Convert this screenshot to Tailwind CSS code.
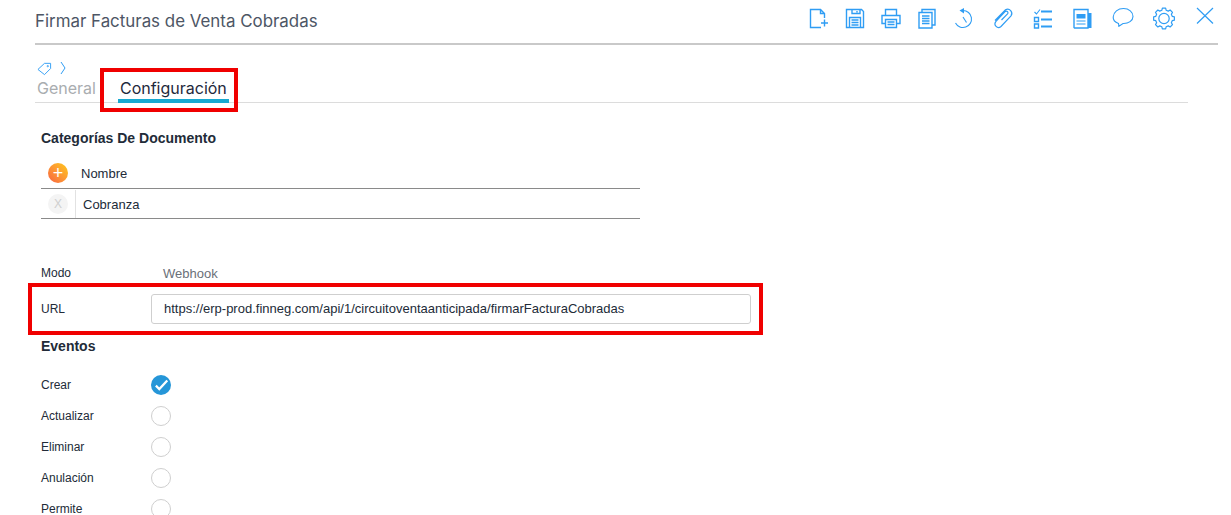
<!DOCTYPE html>
<html lang="es">
<head>
    <meta charset="UTF-8">
    <title>Firmar Facturas de Venta Cobradas</title>
    <script src="https://cdn.jsdelivr.net/npm/@tailwindcss/browser@4"></script>
</head>
<body class="h-[515px] overflow-hidden bg-white font-['Liberation_Sans',sans-serif] text-[#222b38]">
    <!-- Header -->
    <header class="ml-[35px] mr-[13px] h-[45px] border-b-2 border-[#c9c9c9] flex items-start justify-between">
        <h1 class="mt-[10px] text-[16.9px] leading-[22px] text-[#4d5665] font-['Inter',sans-serif]">Firmar Facturas de Venta Cobradas</h1>
        <div class="flex items-start text-[#2f9df4] mr-[1px]">
            <svg class="mt-[6px] w-6 h-6" viewBox="0 0 24 24" fill="none" stroke="currentColor" stroke-width="1.4"><path d="M14 21.5H3.5V3.5H13.5L17.5 7.5V12M13.5 3.5V7.5H17.5M17.5 13.5V20.5M14 17H21"/></svg>
            <svg class="mt-[6px] ml-[12px] w-6 h-6" viewBox="0 0 24 24" fill="none" stroke="currentColor" stroke-width="1.4"><path d="M3.5 3.5H18.5L20.5 5.5V21.5H3.5ZM9 3.5V7.5H17V3.5M14 5V6.5M6.5 21.5V11.5H17.5V21.5M8.5 14H15.5M8.5 16.5H15.5M8.5 19H15.5"/></svg>
            <svg class="mt-[6px] ml-[12px] w-6 h-6" viewBox="0 0 24 24" fill="none" stroke="currentColor" stroke-width="1.4"><path d="M6.5 9.5V3.5H17.5V9.5M6.5 17.5H3V9.5H21V17.5H17.5M6.5 13.5H17.5V21.5H6.5ZM8.5 16H15.5M8.5 18.5H15.5"/></svg>
            <svg class="mt-[6px] ml-[12px] w-6 h-6" viewBox="0 0 24 24" fill="none" stroke="currentColor" stroke-width="1.4"><path d="M7 6.5H17V22H4V6.5H7ZM7 6.5V3.5H20V19H17M7 10H14.5M7 12.5H14.5M7 15H14.5M7 17.5H14.5"/></svg>
            <svg class="mt-[6px] ml-[12px] w-6 h-6" viewBox="0 0 24 24" fill="none" stroke="currentColor" stroke-width="1.1"><path d="M12 4.5A8.5 8.5 0 1 1 4.5 17"/><path d="M8.5 4.5L13 2V7.5Z" fill="currentColor" stroke-width="0"/><path d="M12 11L15.5 16.5"/></svg>
            <svg class="mt-[6px] ml-[16px] w-6 h-6" viewBox="0 0 24 24" fill="none" stroke="currentColor" stroke-width="1.2"><path d="M10.5 14L16.5 7.8C18 6 15.5 4 13.8 5.8L5 15.3C2 19 6.5 23.5 10 20.5L20 9.8C22.5 6.5 18.5 1.5 14.5 3.8L4 14.5"/></svg>
            <svg class="mt-[6px] ml-[16px] w-6 h-6" viewBox="0 0 24 24" fill="none" stroke="currentColor" stroke-width="1.4"><path d="M3.5 6L5.5 8L9 3.5" stroke-width="1.1"/><path d="M3.5 11.5H7.5V15.5H3.5ZM3.5 18H7.5V22H3.5Z"/><path d="M10 5.5H21M10 13.5H21M10 20.5H21" stroke-width="2"/></svg>
            <svg class="mt-[6px] ml-[15px] w-6 h-6" viewBox="0 0 24 24" fill="none" stroke="currentColor" stroke-width="1.4"><path d="M4 3.5H18V22H4.5L4 21.5Z"/><path d="M18 7H21.5V22H18Z" fill="currentColor" stroke-width="0"/><path d="M6.5 8H15.5V12.5H6.5Z" fill="currentColor" stroke-width="0"/><path d="M6.5 15H15.5M6.5 18H15.5" stroke-width="1.2"/></svg>
            <svg class="mt-[5px] ml-[17px] w-6 h-6" viewBox="0 0 24 24" fill="none" stroke="currentColor" stroke-width="1.1"><path d="M7.5 18.5C3.5 17 2 14.5 2.2 12C2.5 7 7 3.5 12.5 3.5C18 3.5 22 7 22 11.5C22 15.5 17.5 18.8 12 18.5L7.5 21.5C7.8 21 7.8 19.5 7.5 18.5Z"/></svg>
            <svg class="mt-[6px] ml-[17px] w-6 h-6" viewBox="0 0 24 24" fill="none" stroke="currentColor" stroke-width="1.2" stroke-linejoin="round"><circle cx="12" cy="12.5" r="5.2"/><path d="M9.8 4.29L10.36 2.13H13.64L14.2 4.29L16.25 5.14L18.17 4.01L20.49 6.33L19.36 8.25L20.21 10.3L22.37 10.86V14.14L20.21 14.7L19.36 16.75L20.49 18.67L18.17 20.99L16.25 19.86L14.2 20.71L13.64 22.87H10.36L9.8 20.71L7.75 19.86L5.83 20.99L3.51 18.67L4.64 16.75L3.79 14.7L1.63 14.14V10.86L3.79 10.3L4.64 8.25L3.51 6.33L5.83 4.01L7.75 5.14Z"/></svg>
            <svg class="mt-[4px] ml-[17px] w-6 h-6" viewBox="0 0 24 24" fill="none" stroke="currentColor" stroke-width="1.2"><path d="M4 4L20 19.5M20 4L4 19.5"/></svg>
        </div>
    </header>

    <!-- Breadcrumb -->
    <div class="ml-[37px] mt-[15px] h-[16px] flex items-center gap-[8px] text-[#2f9df4]">
        <svg class="w-[15px] h-[15px]" viewBox="0 0 16 16" fill="none" stroke="currentColor" stroke-width="1"><path d="M1 9L8 2.5H14.5V8L8 14.5Z"/><circle cx="11.5" cy="5.5" r="0.7"/></svg>
        <svg class="w-[6px] h-[14px]" viewBox="0 0 6 14" fill="none" stroke="currentColor" stroke-width="1"><path d="M1 1L5 7L1 13"/></svg>
    </div>

    <!-- Tabs -->
    <div class="relative ml-[35px] mr-[43px] h-[27px] border-b border-[#dcdcdc] flex font-['Inter',sans-serif] text-[16px] leading-[24px]">
        <span class="ml-[2px] text-[#a9adb0]">General</span>
        <span class="ml-[22px] px-[2px] h-[27px] border-b-[4px] border-[#17a9d1] text-[#1f2a3c]">Configuración</span>
        <div class="absolute left-[65px] top-[-8px] w-[138px] h-[44px] border-[4px] border-[#f00000]"></div>
    </div>

    <main class="ml-[41px] text-[#222b38]">
        <!-- Categorias -->
        <h2 class="mt-[26px] text-[14px] leading-[18px] font-bold">Categorías De Documento</h2>
        <div class="w-[599px] mt-[10px] text-[13px]">
            <div class="h-[32px] flex items-center border-b border-[#8a8a8a]">
                <span class="ml-[7px] w-[20px] h-[20px] rounded-full bg-linear-to-bl from-[#fdc80f] to-[#f7603f] flex items-center justify-center text-white text-[18px] leading-none">+</span>
                <span class="ml-[13px] pt-[2px]">Nombre</span>
            </div>
            <div class="h-[30px] flex items-center border-b border-[#8a8a8a]">
                <span class="ml-[7px] w-[20px] h-[20px] rounded-full bg-[#f4f4f4] flex items-center justify-center text-[#cfcfcf] text-[12px] leading-none">X</span>
                <span class="ml-[7px] pl-[7px] h-[28px] leading-[30px] border-l border-[#e2e2e2]">Cobranza</span>
            </div>
        </div>

        <!-- Modo -->
        <div class="mt-[46px] h-[16px] flex items-center">
            <span class="w-[122px] text-[12px]">Modo</span>
            <span class="pt-[2px] text-[13px] text-[#6b7078]">Webhook</span>
        </div>

        <!-- URL -->
        <div class="ml-[-13px] mt-[2px] w-[735px] h-[52px] border-[4px] border-[#f00000] flex items-center">
            <span class="ml-[9px] w-[110px] text-[12px]">URL</span>
            <div class="w-[600px] h-[30px] border border-[#cfcfcf] rounded-[3px] pl-[12px] flex items-center text-[13px]">https://erp-prod.finneg.com/api/1/circuitoventaanticipada/firmarFacturaCobradas</div>
        </div>

        <!-- Eventos -->
        <h2 class="mt-[2px] text-[14px] leading-[18px] font-bold">Eventos</h2>
        <div class="mt-[14px] text-[12px]">
            <div class="h-[31px] flex items-center">
                <span class="w-[110px]">Crear</span>
                <span class="w-[20px] h-[20px] rounded-full bg-[#2596d8] flex items-center justify-center">
                    <svg class="w-[16px] h-[16px]" viewBox="0 0 14 14" fill="none" stroke="white" stroke-width="2"><path d="M2.5 7.5L5.5 10.5L12.5 3"/></svg>
                </span>
            </div>
            <div class="h-[31px] flex items-center"><span class="w-[110px]">Actualizar</span><span class="w-[20px] h-[20px] rounded-full border border-[#cfcfcf]"></span></div>
            <div class="h-[31px] flex items-center"><span class="w-[110px]">Eliminar</span><span class="w-[20px] h-[20px] rounded-full border border-[#cfcfcf]"></span></div>
            <div class="h-[31px] flex items-center"><span class="w-[110px]">Anulación</span><span class="w-[20px] h-[20px] rounded-full border border-[#cfcfcf]"></span></div>
            <div class="h-[31px] flex items-center"><span class="w-[110px]">Permite</span><span class="w-[20px] h-[20px] rounded-full border border-[#cfcfcf]"></span></div>
        </div>
    </main>
</body>
</html>
